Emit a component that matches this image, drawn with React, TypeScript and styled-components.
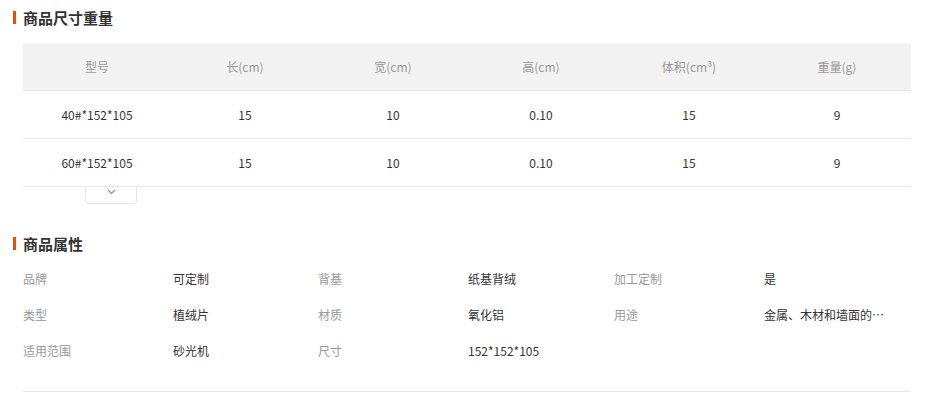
import React from 'react';
import styled, { createGlobalStyle } from 'styled-components';

const GlobalStyle = createGlobalStyle`
	body {
		margin: 0;
		background: #fff;
		font-family: "Microsoft YaHei", "Noto Sans CJK SC", "Liberation Sans", sans-serif;
		font-size: 12px;
		color: #333;
	}
`;

const Page = styled.div`
	padding: 8px 30px 0 23px;
	width: 888px;
`;

const Section = styled.section<{ $gap?: number }>`
	display: flex;
	flex-direction: column;
	margin-top: ${(p) => p.$gap ?? 0}px;
`;

const SectionTitle = styled.h3`
	position: relative;
	margin: 0;
	font-size: 15px;
	font-weight: bold;
	line-height: 20px;
	color: #333;

	&::before {
		content: '';
		position: absolute;
		left: -10px;
		top: 3px;
		width: 3px;
		height: 13px;
		background: #ff4400;
	}
`;

const Table = styled.div`
	margin-top: 15px;
	display: flex;
	flex-direction: column;
`;

const Row = styled.div<{ $head?: boolean }>`
	display: grid;
	grid-template-columns: repeat(6, 1fr);
	height: 47px;
	align-items: center;
	background: ${(p) => (p.$head ? '#f2f2f2' : '#fff')};
	border-bottom: 1px solid #e8e8e8;
	color: ${(p) => (p.$head ? '#999' : '#333')};
`;

const Cell = styled.div`
	text-align: center;
`;

const ToggleTab = styled.div`
	margin-left: 62px;
	width: 52px;
	height: 17px;
	border: 1px solid #e6e6e6;
	border-top: none;
	border-radius: 0 0 4px 4px;
	display: flex;
	justify-content: center;
	align-items: flex-start;
	padding-top: 2px;
	box-sizing: border-box;
`;

const AttrGrid = styled.div`
	margin-top: 6px;
	display: grid;
	grid-template-columns: 150px 145px 150px 146px 150px 147px;
	grid-auto-rows: 36px;
	align-items: center;
	align-content: start;
	height: 132px;
	box-sizing: border-box;
	border-bottom: 1px solid #e6e6e6;
`;

const AttrLabel = styled.div`
	color: #999;
`;

const AttrValue = styled.div`
	color: #333;
	white-space: nowrap;
	overflow: hidden;
	text-overflow: ellipsis;
	padding-right: 24px;
`;

const sizeHead = ['型号', '长(cm)', '宽(cm)', '高(cm)', '体积(cm³)', '重量(g)'];
const sizeRows = [
	['40#*152*105', '15', '10', '0.10', '15', '9'],
	['60#*152*105', '15', '10', '0.10', '15', '9'],
];

const attrs: [string, string][] = [
	['品牌', '可定制'],
	['背基', '纸基背绒'],
	['加工定制', '是'],
	['类型', '植绒片'],
	['材质', '氧化铝'],
	['用途', '金属、木材和墙面的打磨抛光'],
	['适用范围', '砂光机'],
	['尺寸', '152*152*105'],
];

const App = () => {
	return (
		<Page>
			<GlobalStyle />
			<Section>
				<SectionTitle>商品尺寸重量</SectionTitle>
				<Table>
					<Row $head>
						{sizeHead.map((h) => (
							<Cell key={h}>{h}</Cell>
						))}
					</Row>
					{sizeRows.map((r, i) => (
						<Row key={i}>
							{r.map((c, j) => (
								<Cell key={j}>{c}</Cell>
							))}
						</Row>
					))}
				</Table>
				<ToggleTab>
					<svg width='9' height='6' viewBox='0 0 9 6'>
						<path d='M1 1 L4.5 4.5 L8 1' fill='none' stroke='#8a8fa8' strokeWidth='1.2' />
					</svg>
				</ToggleTab>
			</Section>
			<Section $gap={30}>
				<SectionTitle>商品属性</SectionTitle>
				<AttrGrid>
					{attrs.map(([k, v]) => (
						<React.Fragment key={k}>
							<AttrLabel>{k}</AttrLabel>
							<AttrValue title={v}>{v}</AttrValue>
						</React.Fragment>
					))}
				</AttrGrid>
			</Section>
		</Page>
	);
};

export default App;
